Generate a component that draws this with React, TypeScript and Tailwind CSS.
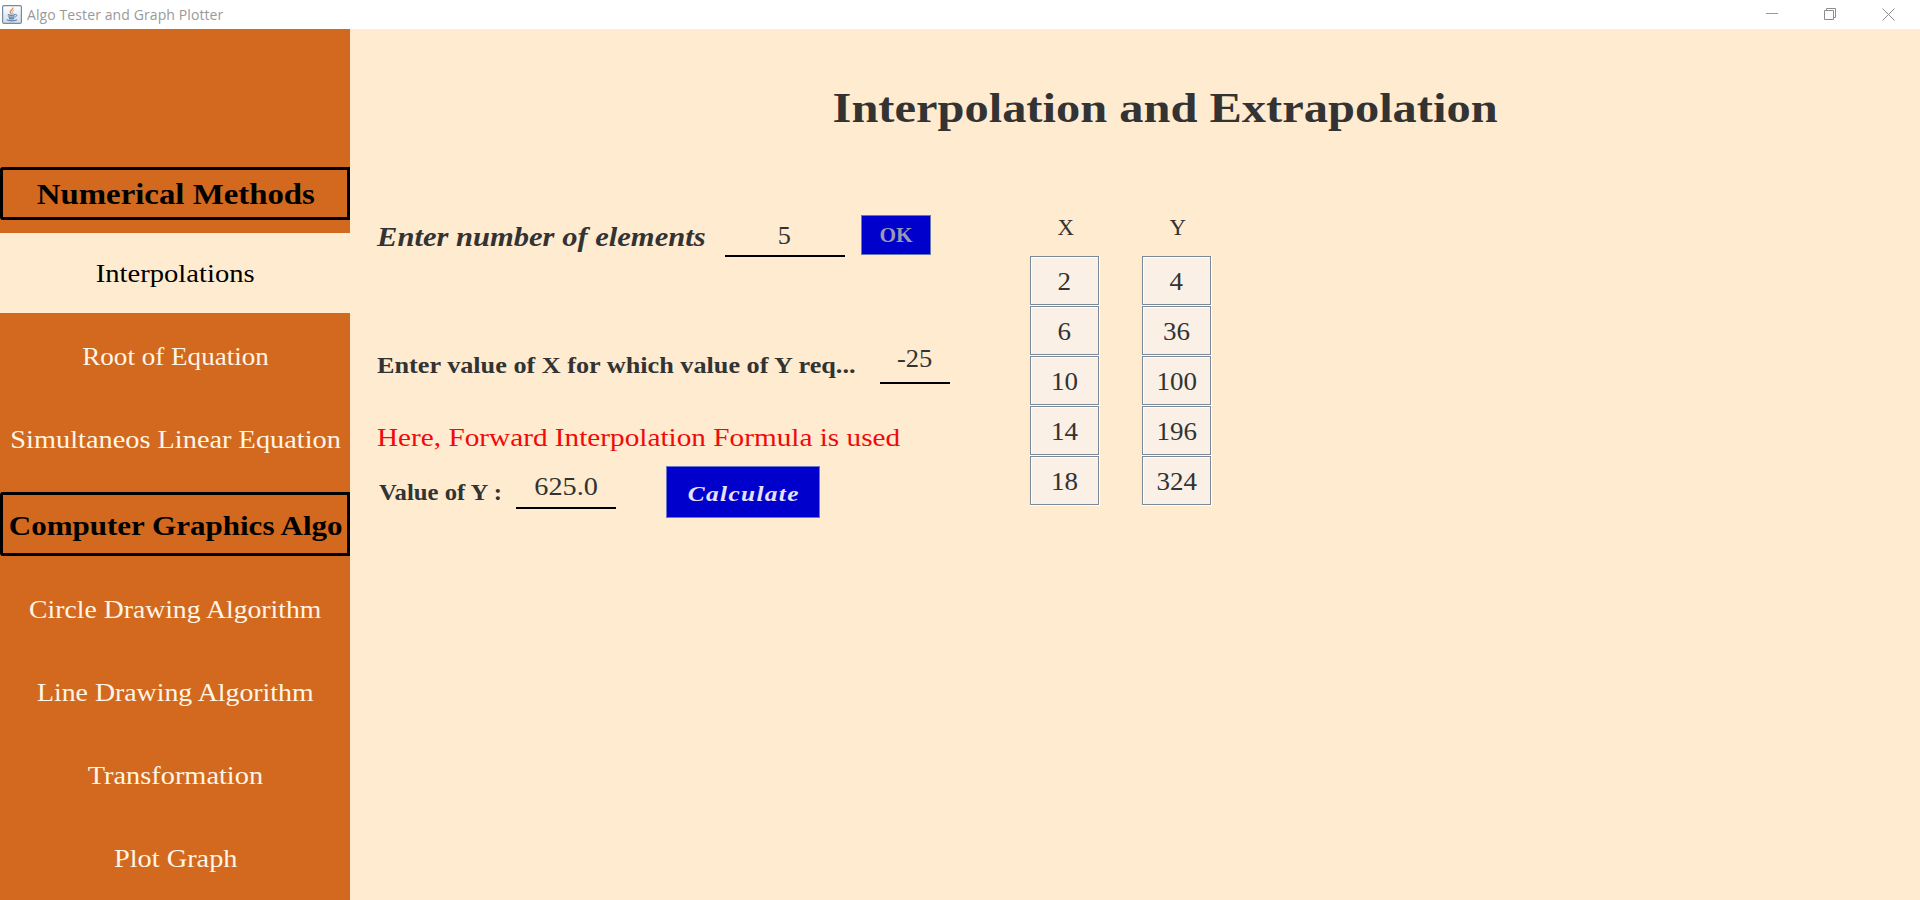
import type { ReactNode } from "react";

type NavEntry = { label: string; stretch: string; active?: boolean };

const numerical: NavEntry[] = [
  { label: "Interpolations", stretch: "scale-x-[1.1]", active: true },
  { label: "Root of Equation", stretch: "scale-x-[1.042]" },
  { label: "Simultaneos Linear Equation", stretch: "scale-x-[1.09]" },
];

const graphics: NavEntry[] = [
  { label: "Circle Drawing Algorithm", stretch: "scale-x-[1.065]" },
  { label: "Line Drawing Algorithm", stretch: "scale-x-[1.07]" },
  { label: "Transformation", stretch: "scale-x-[1.09]" },
  { label: "Plot Graph", stretch: "scale-x-[1.09]" },
];

const table = [
  { name: "X", values: [2, 6, 10, 14, 18] },
  { name: "Y", values: [4, 36, 100, 196, 324] },
];

function Wide({ by, children }: { by: string; children: ReactNode }) {
  return <span className={`inline-block whitespace-nowrap ${by}`}>{children}</span>;
}

function JavaIcon() {
  return (
    <svg width="20" height="19" viewBox="0 0 20 19" fill="none">
      <defs>
        <linearGradient id="plate" x1="0" y1="0" x2="0" y2="1">
          <stop offset="0" stopColor="#ffffff" />
          <stop offset="1" stopColor="#d3dce6" />
        </linearGradient>
      </defs>
      <rect x="0.6" y="0.6" width="18.8" height="17.8" rx="1.5" fill="url(#plate)" stroke="#76899d" strokeWidth="1.2" />
      <path d="M10.8 2.5C11.6 4.6 7.4 5.2 8.3 7.2C8.6 7.9 9.2 8.3 9.4 9" stroke="#e08a4a" strokeWidth="1.3" />
      <path d="M12.2 5C10.4 5.9 10 6.8 10.8 7.8C11 8.2 10.9 8.6 10.5 9" stroke="#e5a06c" strokeWidth="1" />
      <path d="M5.8 9.6C7.6 10.3 11.2 10.3 13 9.6M6.4 11.6C8 12.2 11 12.2 12.6 11.6M7 13.4C8.4 13.9 10.8 13.9 12 13.4" stroke="#5683ae" strokeWidth="1.3" />
      <path d="M13.2 9.5C15.6 9 15.2 11.6 13 12" stroke="#5683ae" strokeWidth="0.9" />
      <path d="M4.6 14.8C7 16.2 12.6 16.2 15 14.8" stroke="#5683ae" strokeWidth="1.2" />
    </svg>
  );
}

function TitleBar() {
  return (
    <header className="flex h-[29px] shrink-0 items-center bg-white pb-px pl-[2px] pr-[25px]">
      <JavaIcon />
      <span className="ml-[5px] whitespace-nowrap pt-px font-['Open_Sans',sans-serif] text-[14px] leading-[29px] tracking-[0.1px] text-[#999]">
        Algo Tester and Graph Plotter
      </span>
      <div className="ml-auto flex items-center gap-[45px]">
        <svg width="13" height="13" viewBox="0 0 13 13" stroke="#999">
          <path d="M0 5.5H12" />
        </svg>
        <svg width="13" height="13" viewBox="0 0 13 13" fill="none" stroke="#8c8c8c">
          <path d="M0.5 2.5H9.5V11.5H0.5ZM2.5 2.5V0.5H11.5V9.5H9.5" />
        </svg>
        <svg width="13" height="13" viewBox="0 0 13 13" stroke="#8c8c8c">
          <path d="M0.5 0.5L12.5 12.5M12.5 0.5L0.5 12.5" />
        </svg>
      </div>
    </header>
  );
}

function NavItem({ label, stretch, active }: NavEntry) {
  const colors = active ? "bg-[#ffebcf] text-black" : "text-[#fff5e6]";
  return (
    <button className={`block h-[80px] w-full pl-px text-center text-[26px] ${colors}`}>
      <Wide by={stretch}>{label}</Wide>
    </button>
  );
}

function Sidebar() {
  return (
    <nav className="w-[350px] shrink-0 bg-[#d2691e] pt-[138px]">
      <h2 className="flex h-[53px] items-center justify-center rounded-l-[3px] border-3 border-black pl-[2px] pt-[2px] text-[29px] font-bold text-black">
        <Wide by="scale-x-[1.132]">Numerical Methods</Wide>
      </h2>
      <div className="mt-[13px] flex flex-col gap-[3px]">
        {numerical.map((n) => (
          <NavItem key={n.label} {...n} />
        ))}
      </div>
      <h2 className="mt-[13px] flex h-[64px] items-center justify-center rounded-l-[3px] border-3 border-black pl-[2px] pt-[3px] text-[28px] font-bold text-black">
        <Wide by="scale-x-[1.108]">Computer Graphics Algo</Wide>
      </h2>
      <div className="mt-[13px] flex flex-col gap-[3px]">
        {graphics.map((n) => (
          <NavItem key={n.label} {...n} />
        ))}
      </div>
    </nav>
  );
}

function Form() {
  return (
    <div className="w-[653px] shrink-0 whitespace-nowrap">
      <div className="flex h-[42px]">
        <span className="w-[348px] text-[27px] font-bold italic leading-[45px]">
          <Wide by="origin-left scale-x-[1.132]">Enter number of elements</Wide>
        </span>
        <div className="w-[120px] border-b-2 border-black pr-px text-center text-[25px] leading-[41px]">
          <Wide by="scale-x-[1.05]">5</Wide>
        </div>
        <button className="ml-[16px] h-[40px] w-[70px] border border-[#6a78b0] bg-[#0000cd] text-[22px] font-bold leading-[38px] text-[#9a9ab0]">
          <Wide by="scale-x-[0.97]">OK</Wide>
        </button>
      </div>
      <div className="mt-[81px] flex h-[46px]">
        <span className="w-[503px] text-[24px] font-bold leading-[54px]">
          <Wide by="origin-left scale-x-[1.092]">Enter value of X for which value of Y req...</Wide>
        </span>
        <div className="w-[70px] border-b-2 border-black pr-px text-center text-[25px] leading-[41px]">
          <Wide by="scale-x-[1.06]">-25</Wide>
        </div>
      </div>
      <p className="mt-[39px] h-[30px] text-[26px] leading-[30px] text-[#f00a0a]">
        <Wide by="origin-left scale-x-[1.125]">Here, Forward Interpolation Formula is used</Wide>
      </p>
      <div className="mt-[13px] flex h-[52px]">
        <span className="w-[139px] pl-[2px] text-[23px] font-bold leading-[54px]">
          <Wide by="origin-left scale-x-[1.075]">Value of Y :</Wide>
        </span>
        <div className="h-[43px] w-[100px] border-b-2 border-black text-center text-[25px] leading-[41px]">
          <Wide by="scale-x-[1.13]">625.0</Wide>
        </div>
        <button className="ml-[50px] h-[52px] w-[154px] border border-[#6a78c8] bg-[#0000cd] pl-[2px] text-[22px] font-bold italic leading-[54px] tracking-[1.2px] text-[#e6e2f4]">
          <Wide by="scale-x-[1.15]">Calculate</Wide>
        </button>
      </div>
    </div>
  );
}

function Table() {
  return (
    <div className="flex gap-[42px] text-[25px]">
      {table.map((col) => (
        <div key={col.name} className="w-[70px]">
          <div className="h-[41px] pl-[2px] text-center text-[24px] leading-[24px]">
            <Wide by="scale-x-[0.95]">{col.name}</Wide>
          </div>
          {col.values.map((v) => (
            <div key={v} className="h-[50px] border-b border-r border-white">
              <div className="h-[49px] border border-[#7a8a99]">
                <div className="h-[47px] border-l border-t border-white bg-[#faf0e6] pr-px text-center leading-[48px]">
                  <Wide by="scale-x-[1.08]">{v}</Wide>
                </div>
              </div>
            </div>
          ))}
        </div>
      ))}
    </div>
  );
}

export default function App() {
  return (
    <div className="flex h-[900px] w-[1920px] flex-col overflow-hidden bg-[#ffebcf] font-['Liberation_Serif',serif] text-[#333]">
      <TitleBar />
      <div className="flex min-h-0 flex-1">
        <Sidebar />
        <main className="flex-1 pl-[27px]">
          <h1 className="mt-[54px] h-[50px] pl-[34px] text-center text-[43px] font-bold leading-[50px]">
            <Wide by="scale-x-[1.127]">Interpolation and Extrapolation</Wide>
          </h1>
          <div className="mt-[82px] flex">
            <Form />
            <Table />
          </div>
        </main>
      </div>
    </div>
  );
}
